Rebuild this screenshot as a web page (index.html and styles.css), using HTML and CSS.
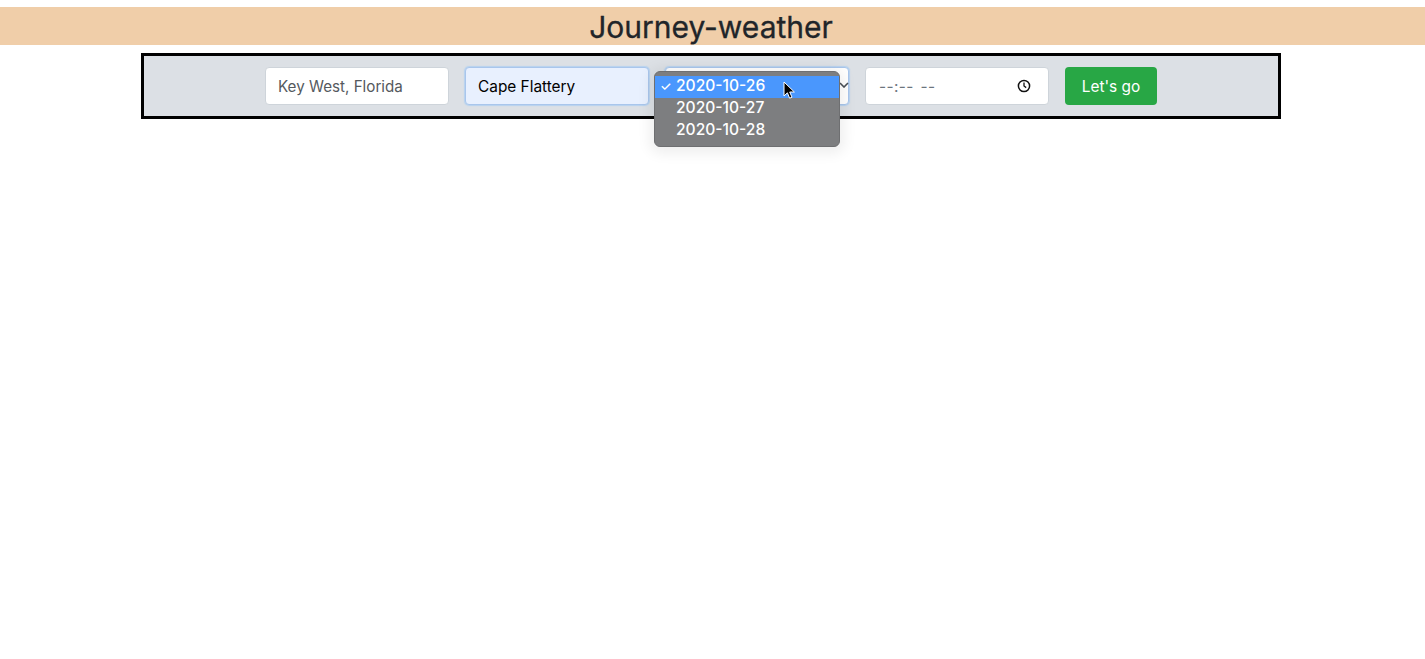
FILE: index.html
```html
<!DOCTYPE html>
<html lang="en">
<head>
  <meta charset="UTF-8">
  <meta name="viewport" content="width=device-width, initial-scale=1.0">
  <title>Journey-weather</title>
  <link rel="stylesheet" href="styles.css">
</head>
<body>
  <h1 class="title">Journey-weather</h1>
  <form class="journey-form">
    <input class="field field-from" type="text" placeholder="Key West, Florida">
    <input class="field field-filled" type="text" value="Cape Flattery">
    <div class="date-select">
      <div class="date-box">
        <svg class="chevron" width="10" height="6" viewBox="0 0 10 6"><path d="M1 1l4 4 4-4" fill="none" stroke="#495057" stroke-width="1.6"/></svg>
      </div>
      <ul class="date-menu">
        <li class="date-option date-option-active"><span class="tick">✓</span>2020-10-26</li>
        <li class="date-option">2020-10-27</li>
        <li class="date-option">2020-10-28</li>
      </ul>
      <svg class="cursor" width="13" height="19" viewBox="0 0 13 19"><path d="M1 1v14l3.4-3.2 2.2 5.4 2.4-1-2.3-5.2h4.7z" fill="#000" stroke="#fff" stroke-width="1"/></svg>
    </div>
    <div class="field time-field">
      <span class="time-text">--:-- --</span>
      <svg class="clock" width="14" height="14" viewBox="0 0 14 14"><circle cx="7" cy="7" r="5.6" fill="none" stroke="#111" stroke-width="1.5"/><path d="M7 3.6V7l2.2 1.6" fill="none" stroke="#111" stroke-width="1.3"/></svg>
    </div>
    <button class="btn-go" type="button">Let's go</button>
  </form>
</body>
</html>
```

FILE: styles.css
```css
* {
  margin: 0;
  padding: 0;
  box-sizing: border-box;
}
body {
  font-family: 'Inter', 'Liberation Sans', sans-serif;
  background: #fff;
  color: #212529;
  min-height: 100vh;
  padding-top: 7px;
  font-size: 15.4px;
}
.title {
  background-color: #f0cea9;
  height: 38px;
  padding-right: 3px;
  font-size: 30px;
  font-weight: 400;
  line-height: 40px;
  text-align: center;
  -webkit-text-stroke: 0.3px #212529;
}
.journey-form {
  width: 1140px;
  height: 66px;
  margin: 8px 0 0 141px;
  padding-left: 121px;
  border: 3px solid #000;
  background-color: #dce0e5;
  display: flex;
  align-items: center;
  gap: 16px;
}
.field {
  width: 184px;
  height: 38px;
  padding: 0 12px;
  border: 1px solid #ced4da;
  border-radius: 4px;
  background: #fff;
  font: inherit;
  color: #495057;
}
.field::placeholder {
  color: #55595e;
  opacity: 1;
}
.field-from {
  font-size: 15.2px;
}
.field-filled {
  background-color: #e8f0fe;
  border-color: #a9c6ec;
  box-shadow: 0 0 1px 1px rgba(128, 189, 255, 0.4);
  color: #000;
}
.date-select {
  position: relative;
  width: 184px;
  height: 38px;
}
.date-box {
  height: 100%;
  border: 1px solid #a9c6ec;
  border-radius: 4px;
  background: #fff;
  box-shadow: 0 0 1px 1px rgba(128, 189, 255, 0.4);
}
.chevron {
  position: absolute;
  right: 0;
  top: 15px;
}
.date-menu {
  position: absolute;
  left: -11px;
  top: 4px;
  width: 186px;
  height: 76px;
  padding-top: 4px;
  list-style: none;
  background-color: #7d7e80;
  border: 1px solid #6e6f71;
  border-radius: 6px;
  box-shadow: 0 2px 14px 4px rgba(0, 0, 0, 0.07);
}
.date-option {
  position: relative;
  height: 22px;
  padding-left: 21px;
  color: #fff;
  font-weight: 500;
  font-size: 15.6px;
  line-height: 20px;
}
.date-option-active {
  background-color: #4a97fd;
}
.tick {
  position: absolute;
  left: 5px;
  font-size: 13px;
}
.cursor {
  position: absolute;
  left: 118px;
  top: 14px;
}
.time-field {
  display: flex;
  align-items: center;
  justify-content: space-between;
  padding-left: 13px;
  padding-right: 17px;
}
.time-text {
  color: #6c757d;
  letter-spacing: 0.4px;
  word-spacing: 2px;
}
.btn-go {
  width: 92px;
  height: 38px;
  border: none;
  border-radius: 4px;
  background-color: #28a745;
  color: #fff;
  font: inherit;
}
```
